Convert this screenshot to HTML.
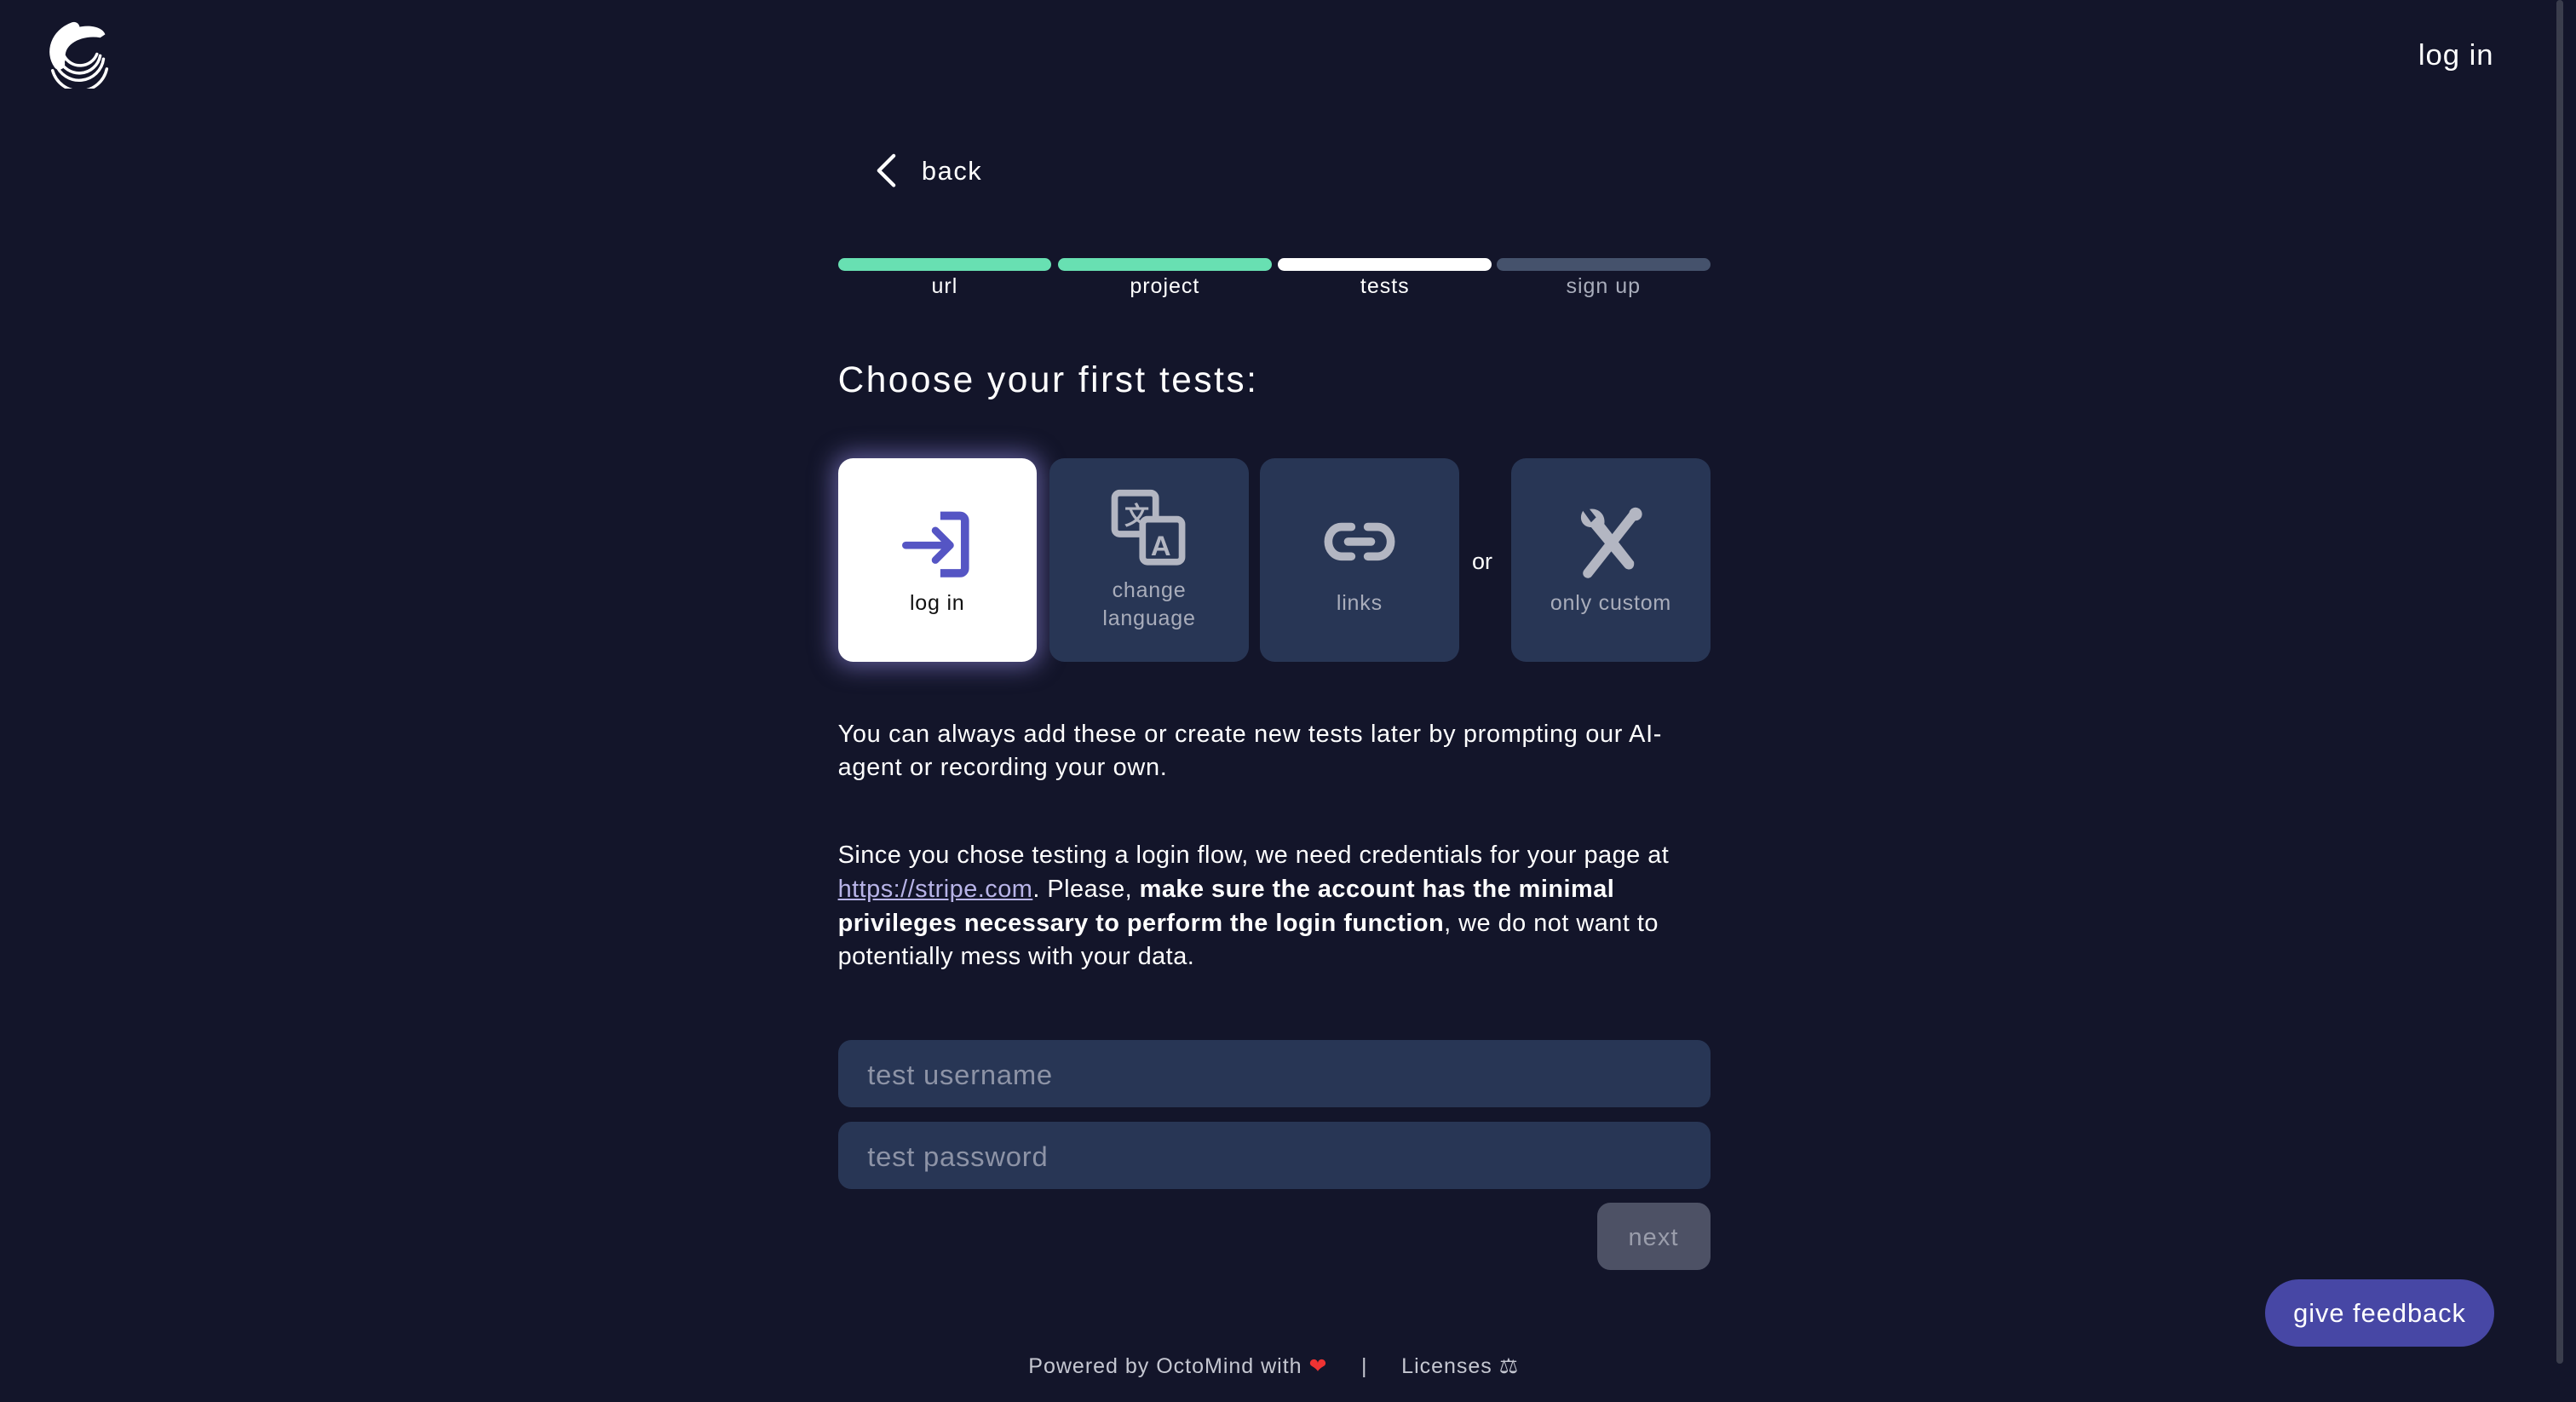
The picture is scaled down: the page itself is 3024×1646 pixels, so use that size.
<!DOCTYPE html>
<html><head><meta charset="utf-8"><style>
html,body{margin:0;padding:0;background:#13152a;overflow:hidden}
#w{zoom:1.92857;width:1568px;height:853.5px;position:relative;font-family:"Liberation Sans",sans-serif;color:#fff}
.a{position:absolute}
.bar{position:absolute;top:157px;height:8px;width:130px;border-radius:4px}
.lbl{position:absolute;top:167px;width:130px;text-align:center;font-size:13px;letter-spacing:.5px}
.card{position:absolute;top:279px;width:121px;height:124px;border-radius:9px;background:#283655;text-align:center;font-size:13px;color:#a9adbb;letter-spacing:.4px}
.card svg{position:absolute;left:50%;transform:translateX(-50%)}
.inp{position:absolute;left:510px;width:531px;height:41px;border-radius:8px;background:#283655;color:#8d93a6;font-size:17px;line-height:42px;padding-left:18px;box-sizing:border-box;letter-spacing:.4px}
p{margin:0}
</style></head><body><div id="w">
<svg class="a" style="left:28px;top:12px" width="42" height="42" viewBox="0 0 42 42">
<path d="M36 9 C34 3 20 2 13 8 C4 15 5 26 10 30 L12 24 C10 15 22 9 33 11 Z" fill="#fff"/>
<path d="M17 5 C6 9 3 20 8 27" stroke="#fff" stroke-width="7" fill="none" stroke-linecap="round"/>
<g stroke="#fff" stroke-width="1.8" fill="none" stroke-linecap="round">
<path d="M6 27 A15 15 0 0 0 35 24"/><path d="M8 24 A13 13 0 0 0 33 22"/><path d="M11 22 A11 11 0 0 0 31 21"/><path d="M4 31 A17 17 0 0 0 37 30"/></g>
</svg>
<div class="a" style="right:50px;top:24px;font-size:18px;letter-spacing:.5px">log in</div>
<div class="a" style="left:1556px;top:0;width:4px;height:830px;background:#3a3d4c;border-radius:2px"></div>
<svg class="a" style="left:532px;top:93px" width="16" height="22" viewBox="0 0 16 22"><path d="M12 2 L3 11 L12 20" stroke="#fff" stroke-width="2.2" fill="none" stroke-linecap="round" stroke-linejoin="round"/></svg>
<div class="a" style="left:561px;top:95px;font-size:16px;letter-spacing:.8px">back</div>
<div class="bar" style="left:510px;background:#68e0b2"></div>
<div class="bar" style="left:644px;background:#68e0b2"></div>
<div class="bar" style="left:778px;background:#fff"></div>
<div class="bar" style="left:911px;background:#45526c"></div>
<div class="lbl" style="left:510px">url</div>
<div class="lbl" style="left:644px">project</div>
<div class="lbl" style="left:778px">tests</div>
<div class="lbl" style="left:911px;color:#a9adbb">sign up</div>
<div class="a" style="left:510px;top:219px;font-size:22px;letter-spacing:1.3px">Choose your first tests:</div>
<div class="card" style="left:510px;background:#fff;color:#111;box-shadow:0 0 14px 3px rgba(150,140,230,.55)">
<svg style="top:28px" width="46" height="46" viewBox="0 0 46 46"><path d="M25 7 H37 a3 3 0 0 1 3 3 V39 a3 3 0 0 1 -3 3 H25" stroke="#5555c4" stroke-width="5" fill="none" stroke-linejoin="round"/><path d="M4 25 H30 M22 16 L31 25 L22 34" stroke="#5555c4" stroke-width="4.5" fill="none" stroke-linecap="round" stroke-linejoin="round"/></svg>
<div class="a" style="top:81px;width:100%">log in</div></div>
<div class="card" style="left:639px">
<svg style="top:18px" width="48" height="48" viewBox="0 0 48 48"><rect x="3" y="3" width="25" height="25" rx="3" stroke="#b3b6c2" stroke-width="4" fill="none"/><text x="9" y="22" font-size="15" font-weight="bold" fill="#b3b6c2" font-family="Liberation Sans">文</text><rect x="20" y="19" width="24" height="26" rx="3" stroke="#b3b6c2" stroke-width="4" fill="#283655"/><text x="25" y="41" font-size="17" font-weight="bold" fill="#b3b6c2" font-family="Liberation Sans">A</text></svg>
<div class="a" style="top:72px;width:100%;line-height:17px">change<br>language</div></div>
<div class="card" style="left:767px">
<svg style="top:36px" width="44" height="30" viewBox="0 0 44 30"><path d="M17 6 H11 a8 9 0 0 0 0 18 H17 M27 6 H33 a8 9 0 0 1 0 18 H27 M15 15 H29" stroke="#b3b6c2" stroke-width="5" fill="none" stroke-linecap="round"/></svg>
<div class="a" style="top:81px;width:100%">links</div></div>
<div class="a" style="left:896px;top:334px;font-size:14px">or</div>
<div class="card" style="left:920px">
<svg style="top:28px" width="44" height="46" viewBox="0 0 44 46"><path d="M5 4 C2 9 5 14 10 14 L30 38 C32 41 37 40 36 35 L18 12 C19 6 14 2 9 3 L13 8 L10 11 Z" fill="#b3b6c2"/><path d="M37 5 L8 42" stroke="#b3b6c2" stroke-width="6" stroke-linecap="round"/><circle cx="37" cy="6" r="4" fill="#b3b6c2"/></svg>
<div class="a" style="top:81px;width:100%">only custom</div></div>
<p class="a" style="left:510px;top:437px;width:535px;font-size:15px;line-height:20.5px;letter-spacing:.35px">You can always add these or create new tests later by prompting our AI-agent or recording your own.</p>
<p class="a" style="left:510px;top:511px;width:535px;font-size:15px;line-height:20.5px;letter-spacing:.25px">Since you chose testing a login flow, we need credentials for your page at <u style="color:#b8b4e8">https://stripe.com</u>. Please, <b>make sure the account has the minimal privileges necessary to perform the login function</b>, we do not want to potentially mess with your data.</p>
<div class="inp" style="top:633px">test username</div>
<div class="inp" style="top:683px">test password</div>
<div class="a" style="left:972px;top:732px;width:69px;height:41px;border-radius:8px;background:#4d5165;color:#9a9dab;font-size:15px;line-height:43px;text-align:center;letter-spacing:.6px">next</div>
<div class="a" style="left:1379px;top:779px;width:139px;height:41px;border-radius:21px;background:#4747a5;font-size:16px;line-height:41px;text-align:center;letter-spacing:.5px">give feedback</div>
<div class="a" style="left:626px;top:824px;font-size:13px;color:#c5c7d1;letter-spacing:.5px;white-space:pre">Powered by OctoMind with <span style="color:#e33">❤</span>     |     Licenses ⚖</div>
</div></body></html>
